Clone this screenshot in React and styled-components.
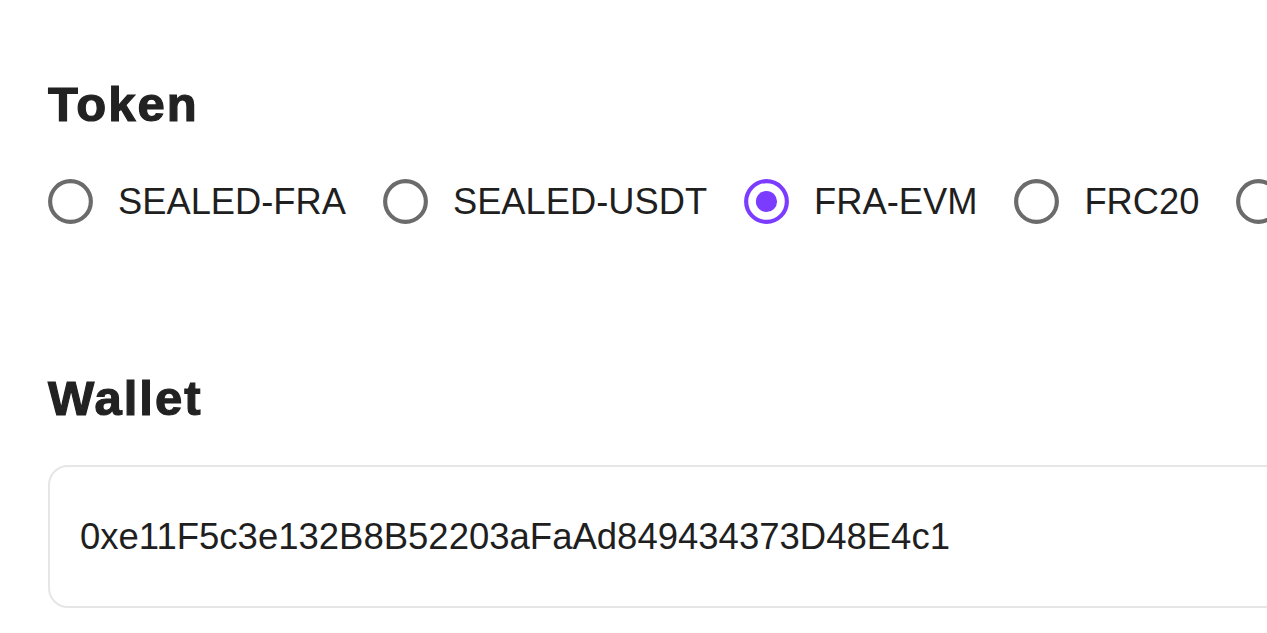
import React from "react";
import styled, { createGlobalStyle } from "styled-components";

const Global = createGlobalStyle`
  html, body { margin: 0; padding: 0; overflow: hidden; background: #ffffff; }
  body { font-family: "Liberation Sans", Arial, sans-serif; color: #1f1f1f; }
`;

const Page = styled.main`
  width: 1500px;
  padding: 77px 0 0 48px;
  box-sizing: border-box;
`;

const Section = styled.section`
  display: flex;
  flex-direction: column;
  margin-top: ${(p) => p.$top || 0}px;
`;

const Heading = styled.h2`
  margin: 0;
  font-family: "Liberation Sans", Arial, sans-serif;
  font-size: 49px;
  line-height: 55px;
  font-weight: 700;
  letter-spacing: 2px;
  -webkit-text-stroke: 1.2px #222;
  color: #222;
`;

const RadioRow = styled.div`
  display: flex;
  align-items: center;
  gap: 37px;
  margin-top: 47px;
  white-space: nowrap;
`;

const RadioItem = styled.label`
  display: flex;
  align-items: center;
  gap: 25px;
  font-size: 36.3px;
  line-height: 41px;
  color: #1f1f1f;
`;

const Icon = styled.svg`
  width: 45px;
  height: 45px;
  flex: none;
  display: block;
`;

const Field = styled.div`
  margin-top: 39px;
  width: 1400px;
  height: 143px;
  box-sizing: border-box;
  border: 2px solid #e6e6e6;
  border-radius: 20px;
  display: flex;
  align-items: center;
  padding-left: 30px;
  font-size: 36.5px;
  line-height: 41px;
  color: #1f1f1f;
`;

function RadioIcon({ checked }) {
  const color = checked ? "#7b3cff" : "#6b6b6b";
  return (
    <Icon viewBox="0 0 20 20">
      <circle cx="10" cy="10" r="9.05" fill="none" stroke={color} strokeWidth="1.85" />
      {checked && <circle cx="10" cy="10" r="4.7" fill={color} />}
    </Icon>
  );
}

const tokens = ["SEALED-FRA", "SEALED-USDT", "FRA-EVM", "FRC20", "FRC721"];

export default function App() {
  return (
    <>
      <Global />
      <Page>
        <Section>
          <Heading>Token</Heading>
          <RadioRow>
            {tokens.map((t) => (
              <RadioItem key={t}>
                <RadioIcon checked={t === "FRA-EVM"} />
                {t}
              </RadioItem>
            ))}
          </RadioRow>
        </Section>
        <Section $top={147}>
          <Heading>Wallet</Heading>
          <Field>0xe11F5c3e132B8B52203aFaAd849434373D48E4c1</Field>
        </Section>
      </Page>
    </>
  );
}
